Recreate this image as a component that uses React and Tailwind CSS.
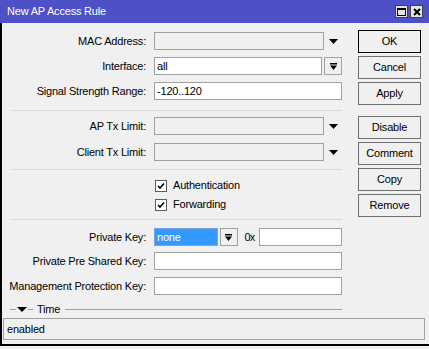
const font = { fontFamily: '"Liberation Sans", Arial, sans-serif' };

const DownArrow = () => (
  <svg width="9" height="5" viewBox="0 0 9 5">
    <polygon points="0,0 9,0 4.5,5" fill="#000" />
  </svg>
);

const BarArrow = () => (
  <svg width="7" height="7" viewBox="0 0 7 7">
    <rect x="0" y="0" width="7" height="1.5" fill="#000" />
    <polygon points="0,2.5 7,2.5 3.5,7" fill="#000" />
  </svg>
);

const Label = ({ children }) => (
  <div className="w-[145px] shrink-0 text-right whitespace-nowrap pr-[1px]">{children}</div>
);

const Box = ({ value, disabled, className = "" }) => (
  <div
    className={`h-[18px] border border-[#a0a0a0] px-[2px] leading-[16px] ${
      disabled ? "bg-[#f0f0f0]" : "bg-white"
    } ${className}`}
  >
    {value}
  </div>
);

const Row = ({ label, children, className = "" }) => (
  <div className={`flex items-center h-[18px] ${className}`}>
    <Label>{label}</Label>
    <div className="ml-[7px] w-[188px] flex items-center">{children}</div>
  </div>
);

const ArrowField = ({ value }) => (
  <>
    <Box value={value} disabled className="w-[170px]" />
    <div className="w-[18px] flex justify-center">
      <DownArrow />
    </div>
  </>
);

const DropButton = () => (
  <div className="h-[18px] w-[18px] border border-[#a0a0a0] bg-[#f0f0f0] flex items-center justify-center">
    <BarArrow />
  </div>
);

const Check = ({ label }) => (
  <div className="flex items-center h-[19px] pl-[153px]">
    <div className="w-[12px] h-[12px] border border-[#5a5a5a] bg-white flex items-center justify-center">
      <svg width="8" height="8" viewBox="0 0 8 8">
        <path d="M1 4 L3 6 L7 1.5" stroke="#000" strokeWidth="1.6" fill="none" />
      </svg>
    </div>
    <span className="ml-[6px]">{label}</span>
  </div>
);

const Sep = ({ className = "" }) => (
  <div className={`ml-[9px] w-[331px] h-px bg-[#d8d8d8] ${className}`} />
);

const Btn = ({ children, primary, className = "" }) => (
  <div
    className={`h-[23px] w-[63px] flex items-center justify-center bg-[#f0f0f0] border ${
      primary ? "border-black" : "border-[#707070]"
    } ${className}`}
  >
    {children}
  </div>
);

export default function App() {
  return (
    <div
      className="w-[429px] h-[349px] bg-[#f0f0f0] text-[11px] tracking-[-0.2px] text-black"
      style={font}
    >
      <div className="h-[23px] bg-[#4e50c8] flex items-center pl-[7px] pr-[6px]">
        <span className="text-white text-[11px] flex-1">New AP Access Rule</span>
        <div className="flex gap-[2px]">
          <div className="w-[13px] h-[13px] bg-[#e4e4e4] border border-[#404040] flex items-center justify-center">
            <div className="w-[9px] h-[8px] border border-black border-t-2" />
          </div>
          <div className="w-[13px] h-[13px] bg-[#e4e4e4] border border-[#404040] flex items-center justify-center">
            <svg width="8" height="8" viewBox="0 0 8 8">
              <path d="M1 1 L7 7 M7 1 L1 7" stroke="#000" strokeWidth="2" />
            </svg>
          </div>
        </div>
      </div>

      <div className="h-[323px] border-l-2 border-b-2 border-black">
        <div className="flex items-start">
          <div className="w-[340px] shrink-0">
            <Row label="MAC Address:" className="mt-[9px]">
              <ArrowField />
            </Row>
            <Row label="Interface:" className="mt-[7px]">
              <Box value="all" className="w-[168px]" />
              <div className="ml-[2px]">
                <DropButton />
              </div>
            </Row>
            <Row label="Signal Strength Range:" className="mt-[7px]">
              <Box value="-120..120" className="w-[188px]" />
            </Row>
            <Sep className="mt-[10px]" />
            <Row label="AP Tx Limit:" className="mt-[6px]">
              <ArrowField />
            </Row>
            <Row label="Client Tx Limit:" className="mt-[8px]">
              <ArrowField />
            </Row>
            <Sep className="mt-[8px]" />
            <div className="mt-[6px]">
              <Check label="Authentication" />
              <Check label="Forwarding" />
            </div>
            <Sep className="mt-[5px]" />
            <Row label="Private Key:" className="mt-[8px]">
              <div className="h-[18px] w-[64px] border border-[#7aa7d8] bg-[#3399ff] text-white px-[2px] leading-[16px]">
                none
              </div>
              <div className="ml-[2px]">
                <DropButton />
              </div>
              <span className="ml-[7px] w-[14px] tracking-[-1px]">0x</span>
              <Box className="w-[84px]" />
            </Row>
            <Row label="Private Pre Shared Key:" className="mt-[6px]">
              <Box className="w-[188px]" />
            </Row>
            <Row label="Management Protection Key:" className="mt-[7px]">
              <Box className="w-[188px]" />
            </Row>
            <div className="mt-[8px] h-[12px] flex items-center">
              <div className="ml-[8px] w-[6px] h-px bg-[#a0a0a0]" />
              <svg width="10" height="5" viewBox="0 0 10 5" className="ml-[1px]">
                <polygon points="0,0 10,0 5,5" fill="#000" />
              </svg>
              <div className="ml-[1px] w-[5px] h-px bg-[#a0a0a0]" />
              <span className="ml-[4px]">Time</span>
              <div className="ml-[5px] flex-1 h-px bg-[#a0a0a0]" />
            </div>
          </div>

          <div className="ml-[16px] mt-[7px] flex flex-col">
            <Btn primary>OK</Btn>
            <Btn className="mt-[3px]">Cancel</Btn>
            <Btn className="mt-[3px]">Apply</Btn>
            <Btn className="mt-[11px]">Disable</Btn>
            <Btn className="mt-[3px]">Comment</Btn>
            <Btn className="mt-[3px]">Copy</Btn>
            <Btn className="mt-[3px]">Remove</Btn>
          </div>
        </div>

        <div className="mt-[3px] ml-px w-[422px] h-[22px] border border-[#a0a0a0] flex items-center pl-[3px]">
          enabled
        </div>
      </div>
    </div>
  );
}
